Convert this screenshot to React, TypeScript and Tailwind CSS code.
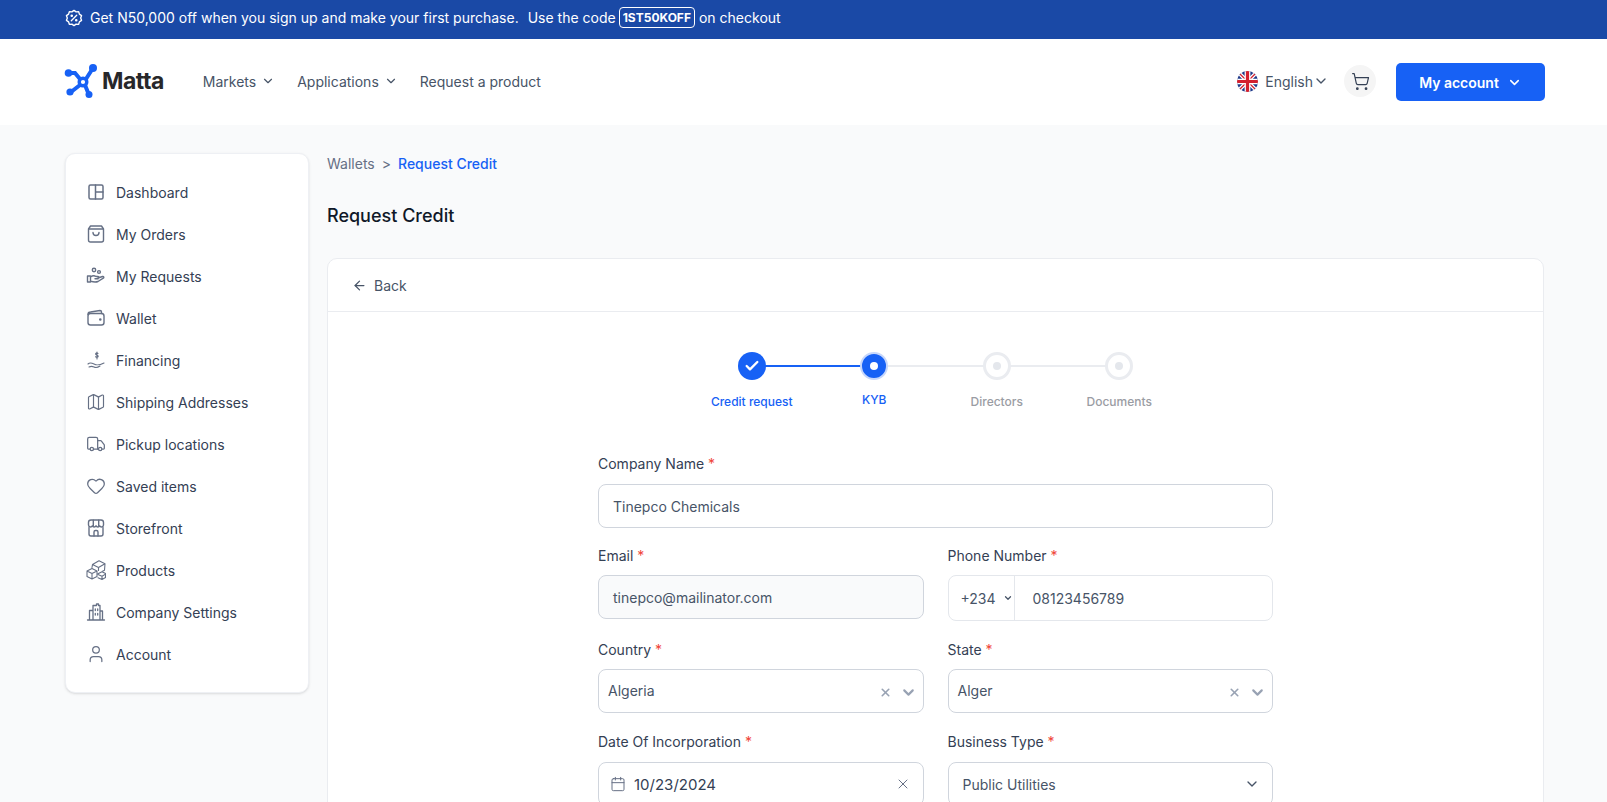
import React from 'react'
import { ChevronDown, ShoppingCart, ArrowLeft, Check, X, Calendar, Map, Truck, Heart, User } from 'lucide-react'

const iconClass = 'h-[20px] w-[20px] text-[#667085]'

const Icon = ({ children, strokeWidth = 1.4 }: { children: React.ReactNode; strokeWidth?: number }) => (
  <svg viewBox="0 0 20 20" fill="none" stroke="#667085" strokeWidth={strokeWidth} strokeLinecap="round" strokeLinejoin="round" className="h-[20px] w-[20px]">
    {children}
  </svg>
)

const menu: { label: string; icon: React.ReactNode }[] = [
  {
    label: 'Dashboard',
    icon: (
      <Icon strokeWidth={1.5}>
        <rect x="3" y="3" width="14" height="14" rx="1.5" />
        <path d="M9.5 3v14M9.5 10h7.5" />
      </Icon>
    ),
  },
  {
    label: 'My Orders',
    icon: (
      <Icon>
        <path d="M4.5 2h11l2 3v11a2 2 0 0 1-2 2h-11a2 2 0 0 1-2-2V5z" />
        <path d="M2.8 5h14.4M7 8.5a3 3 0 0 0 6 0" />
      </Icon>
    ),
  },
  {
    label: 'My Requests',
    icon: (
      <Icon>
        <circle cx="8" cy="4" r="1.7" />
        <circle cx="13" cy="6" r="1.4" />
        <path d="M1.5 10h3v6h-3zM4.500 11c2-1.500 4-1.500 5.500-.500h2a1 1 0 0 1 0 2.200H9M12 12l4.500-1.500c1.300-.3 1.800 1 .8 1.700L12 15.500c-2.500 1-5 .5-7.500-.3" />
      </Icon>
    ),
  },
  {
    label: 'Wallet',
    icon: (
      <Icon>
        <path d="M2 6.500A2.500 2.500 0 0 1 4.500 4L14 2.500c1 0 1.500.6 1.500 1.500v1.500" />
        <rect x="2" y="5.500" width="16" height="11.500" rx="2.500" />
        <circle cx="14.300" cy="11.500" r=".6" fill="#667085" />
      </Icon>
    ),
  },
  {
    label: 'Financing',
    icon: (
      <Icon strokeWidth={1.1}>
        <path d="M2 14c2-2 4-1 6 0s4 2 10-1M3 17c2-1 3-1 5 0s3 1 6-1" />
        <path d="M12 3.500c-1-.8-2.400-.4-2.400.5 0 1.400 2.600.8 2.600 2.200 0 1-1.500 1.300-2.600.5M11 2v7" />
      </Icon>
    ),
  },
  { label: 'Shipping Addresses', icon: <Map className={iconClass} strokeWidth={1.4} /> },
  { label: 'Pickup locations', icon: <Truck className={iconClass} strokeWidth={1.5} /> },
  { label: 'Saved items', icon: <Heart className={iconClass} strokeWidth={1.5} /> },
  {
    label: 'Storefront',
    icon: (
      <Icon>
        <path d="M3 9.500V16a2 2 0 0 0 2 2h10a2 2 0 0 0 2-2V9.500" />
        <path d="M5 2h10a2.500 2.500 0 0 1 2.500 2.500V7a2 2 0 0 1-3.800.8 2 2 0 0 1-3.700 0 2 2 0 0 1-3.700 0A2 2 0 0 1 2.500 7V4.500A2.500 2.500 0 0 1 5 2z" />
        <path d="M7.300 2.300v5.500M12.700 2.300v5.500M8 18v-4a1.500 1.500 0 0 1 1.500-1.500h1A1.500 1.500 0 0 1 12 14v4" />
      </Icon>
    ),
  },
  {
    label: 'Products',
    icon: (
      <Icon strokeWidth={1.1}>
        <path d="M1 11l5-2.500 5 2.500v5.500l-5 2.500-5-2.500zM1 11l5 2.500 5-2.500M6 13.500V19" />
        <path d="M11.500 14l4.500-2.300 3.500 1.900v4L16 19.500 12 17.800M12 14.500l4 1.800 3.500-2.200M16 16.300v3.200" />
        <path d="M6 7.500 6.500 4.500 13 .8l6 3-.5 6.500-2 1M6.500 4.500l6 3 6-3.500M12.500 7.500v3" />
      </Icon>
    ),
  },
  {
    label: 'Company Settings',
    icon: (
      <Icon strokeWidth={1.3}>
        <path d="M1.500 18h17M3.500 18V8.500h3.500M7 18V3.500h3.500V2h2v1.500H14V18M14 9h2.500v9" />
        <path d="M9.300 7v1.500M11.700 7v1.500M9.300 11.500V13M11.700 11.500V13" />
      </Icon>
    ),
  },
  { label: 'Account', icon: <User className={iconClass} strokeWidth={1.5} /> },
]

const Logo = () => (
  <svg viewBox="0 0 34 34" className="h-[34px] w-[34px]" fill="#1761f5">
    <path d="M4 9h7l5 6M29 4l-7 11M7 28l9-7M25 31l-4-10" stroke="#1761f5" strokeWidth="4" fill="none" strokeLinecap="round" />
    <circle cx="19" cy="18" r="3.800" fill="#fff" stroke="#1761f5" strokeWidth="3.400" />
    <circle cx="4.500" cy="9" r="3.800" />
    <circle cx="29" cy="4" r="4" />
    <circle cx="6" cy="28" r="3.600" />
    <circle cx="25" cy="30.500" r="3.500" />
  </svg>
)

const Flag = () => (
  <svg viewBox="0 0 22 22" className="h-[21px] w-[21px] rounded-full">
    <rect width="22" height="22" fill="#1f3a8a" />
    <path d="M0 0 22 22M22 0 0 22" stroke="#fff" strokeWidth="4" />
    <path d="M0 0 22 22M22 0 0 22" stroke="#d3202f" strokeWidth="1.400" />
    <path d="M11 0v22M0 11h22" stroke="#fff" strokeWidth="6" />
    <path d="M11 0v22M0 11h22" stroke="#d3202f" strokeWidth="3.400" />
  </svg>
)

const PromoBadge = () => (
  <svg viewBox="0 0 20 20" fill="none" stroke="#fff" strokeWidth="1.500" strokeLinecap="round" strokeLinejoin="round" className="mr-[7px] h-[18px] w-[18px]">
    <path d="M10 1.500l2.300 1.700 2.900-.2.800 2.700 2.400 1.700-1 2.600 1 2.600-2.400 1.700-.8 2.700-2.900-.2L10 18.500l-2.300-1.700-2.900.2-.8-2.700-2.400-1.700 1-2.600-1-2.600 2.400-1.700.8-2.700 2.900.2z" />
    <path d="M7 13l6-6" />
    <circle cx="7.500" cy="7.500" r=".7" fill="#fff" />
    <circle cx="12.500" cy="12.500" r=".7" fill="#fff" />
  </svg>
)

const Label = ({ text }: { text: string }) => (
  <div className="text-[14px] leading-[20px] text-[#344054]">
    {text} <span className="text-[#f04438]">*</span>
  </div>
)

const SelectBox = ({ value }: { value: string }) => (
  <div className="mt-[9px] flex h-[44px] items-center rounded-[8px] border border-[#d0d5dd] bg-white pl-[9px] pr-[6px] text-[14px] text-[#475467]">
    <span className="flex-1 pb-[1px]">{value}</span>
    <X className="mt-[3px] h-[13px] w-[13px] text-[#98a2b3]" strokeWidth={3} />
    <ChevronDown className="ml-[8px] mt-[3px] h-[17px] w-[17px] text-[#98a2b3]" strokeWidth={3} />
  </div>
)

const steps = [
  { label: 'Credit request', state: 'done' },
  { label: 'KYB', state: 'active' },
  { label: 'Directors', state: 'todo' },
  { label: 'Documents', state: 'todo' },
]

const Stepper = () => (
  <div className="flex justify-center pt-[40px]">
    {steps.map((step, i) => (
      <div key={step.label} className="relative flex w-[122.5px] flex-col items-center">
        {i < steps.length - 1 && (
          <div className={`absolute left-1/2 top-[13px] h-[2px] w-[122.5px] ${i === 0 ? 'bg-[#1761f5]' : 'bg-[#eaecf0]'}`} />
        )}
        {step.state === 'done' && (
          <div className="relative flex h-[28px] w-[28px] items-center justify-center rounded-full bg-[#1761f5]">
            <Check className="h-[16px] w-[16px] text-white" strokeWidth={3.5} />
          </div>
        )}
        {step.state === 'active' && (
          <div className="relative flex h-[28px] w-[28px] items-center justify-center rounded-full border-[2px] border-[#c7d7fb] bg-[#1761f5]">
            <div className="h-[8px] w-[8px] rounded-full bg-white" />
          </div>
        )}
        {step.state === 'todo' && (
          <div className="relative flex h-[28px] w-[28px] items-center justify-center rounded-full border-[3px] border-[#eaecf0] bg-white">
            <div className="h-[8px] w-[8px] rounded-full bg-[#e4e7ec]" />
          </div>
        )}
        <div className={`whitespace-nowrap text-[12px] font-medium leading-[16px] ${step.state === 'active' ? 'mt-[12px] text-[#1761f5]' : step.state === 'done' ? 'mt-[14px] text-[#1761f5]' : 'mt-[14px] text-[#9a9ca3]'}`}>
          {step.label}
        </div>
      </div>
    ))}
  </div>
)

export default function App() {
  return (
    <div className="h-[802px] overflow-hidden bg-[#f9fafb] font-[family-name:Inter,sans-serif]">
      <div className="flex h-[39px] items-center bg-[#1a49a6] pb-[4px] pl-[65px] text-[14px] text-white">
        <PromoBadge />
        <span>Get N50,000 off when you sign up and make your first purchase.</span>
        <span className="ml-[9px]">Use the code</span>
        <span className="ml-[3px] mr-[4px] rounded-[4px] border border-white px-[3px] text-[12px] font-bold leading-[19px]">1ST50KOFF</span>
        <span>on checkout</span>
      </div>

      <header className="flex h-[86px] items-center bg-white pb-[2px] pl-[64px] pr-[62px]">
        <Logo />
        <span className="ml-[4px] text-[23px] font-bold leading-none tracking-[-0.5px] text-[#27272a]">Matta</span>
        <nav className="ml-[39px] flex items-center text-[14px] text-[#475467]">
          <span>Markets</span>
          <ChevronDown className="ml-[5px] h-[14px] w-[14px]" />
          <span className="ml-[22px]">Applications</span>
          <ChevronDown className="ml-[5px] h-[14px] w-[14px]" />
          <span className="ml-[22px]">Request a product</span>
        </nav>
        <div className="ml-auto flex items-center">
          <Flag />
          <span className="ml-[7px] text-[14px] text-[#475467]">English</span>
          <ChevronDown className="h-[16px] w-[16px] text-[#475467]" />
          <div className="ml-[15px] flex h-[32px] w-[32px] items-center justify-center rounded-full bg-[#f5f5f5]">
            <ShoppingCart className="h-[19px] w-[19px] text-[#344054]" strokeWidth={1.5} />
          </div>
          <button className="ml-[20px] mt-[2px] flex h-[38px] w-[149px] items-center justify-center rounded-[5px] bg-[#1761f5] text-[14px] font-semibold text-white">
            My account
            <ChevronDown className="ml-[8px] h-[15px] w-[15px]" strokeWidth={2.5} />
          </button>
        </div>
      </header>

      <div className="flex items-start gap-[18px] pl-[65px] pr-[63px] pt-[28px]">
        <aside className="w-[244px] shrink-0 rounded-[10px] border border-[#eef0f4] bg-white py-[17px] pl-[20px] shadow-sm">
          {menu.map((item) => (
            <div key={item.label} className="flex h-[42px] items-center text-[14px] text-[#344054]">
              <span className="flex w-[30px] shrink-0">{item.icon}</span>
              {item.label}
            </div>
          ))}
        </aside>

        <main className="min-w-0 flex-1">
          <div className="flex items-center pt-[1px] text-[14px] leading-[20px]">
            <span className="text-[#667085]">Wallets</span>
            <span className="mx-[7px] text-[#667085]">&gt;</span>
            <span className="font-medium text-[#1761f5]">Request Credit</span>
          </div>
          <h1 className="mt-[30px] text-[18px] font-medium leading-[24px] text-[#101828]">Request Credit</h1>
          <section className="mt-[30px] rounded-t-[10px] border border-[#eaecf0] bg-white pb-[40px]">
            <div className="flex h-[53px] items-center border-b border-[#eaecf0] pl-[24px] text-[14px] text-[#475467]">
              <ArrowLeft className="mr-[7px] h-[15px] w-[15px]" />
              Back
            </div>
            <Stepper />
            <div className="mx-auto mt-[44px] w-[675px]">
              <Label text="Company Name" />
              <div className="mt-[10px] flex h-[44px] items-center rounded-[8px] border border-[#d0d5dd] bg-white pl-[14px] text-[14px] text-[#475467]">Tinepco Chemicals</div>

              <div className="mt-[18px] grid grid-cols-2 gap-x-[24px]">
                <div>
                  <Label text="Email" />
                  <div className="mt-[9px] flex h-[44px] items-center rounded-[8px] border border-[#d0d5dd] bg-[#f9fafb] pl-[14px] text-[14px] text-[#475467]">tinepco@mailinator.com</div>
                </div>
                <div>
                  <Label text="Phone Number" />
                  <div className="mt-[9px] flex h-[46px] items-center rounded-[8px] border border-[#e4e7ec] bg-white text-[14px] text-[#475467]">
                    <div className="flex h-full w-[66px] items-center border-r border-[#e4e7ec] pl-[12px]">
                      +234
                      <ChevronDown className="ml-[7px] h-[10px] w-[10px]" strokeWidth={3} />
                    </div>
                    <span className="pl-[18px]">08123456789</span>
                  </div>
                </div>

                <div className="mt-[19px]">
                  <Label text="Country" />
                  <SelectBox value="Algeria" />
                </div>
                <div className="mt-[19px]">
                  <Label text="State" />
                  <SelectBox value="Alger" />
                </div>

                <div className="mt-[19px]">
                  <Label text="Date Of Incorporation" />
                  <div className="mt-[10px] flex h-[44px] items-center rounded-[8px] border border-[#d0d5dd] bg-white pl-[11px] pr-[12px] text-[15px] text-[#344054]">
                    <Calendar className="mr-[8px] h-[16px] w-[16px] text-[#667085]" strokeWidth={1.5} />
                    <span className="flex-1 pt-[3px]">10/23/2024</span>
                    <X className="h-[16px] w-[16px] text-[#667085]" strokeWidth={1.5} />
                  </div>
                </div>
                <div className="mt-[19px]">
                  <Label text="Business Type" />
                  <div className="mt-[10px] flex h-[44px] items-center rounded-[8px] border border-[#d0d5dd] bg-white pl-[14px] pr-[12px] text-[14px] text-[#475467]">
                    <span className="flex-1">Public Utilities</span>
                    <ChevronDown className="h-[16px] w-[16px]" strokeWidth={2} />
                  </div>
                </div>
              </div>
            </div>
          </section>
        </main>
      </div>
    </div>
  )
}
